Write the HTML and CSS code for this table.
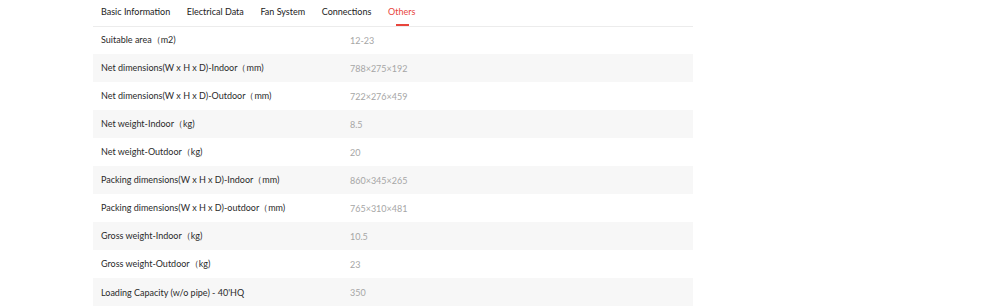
FILE: index.html
```html
<!DOCTYPE html>
<html>
<head>
<meta charset="utf-8">
<link rel="stylesheet" href="styles.css">
</head>
<body>
<div class="specs">
  <div class="tabs">
    <span class="tab">Basic Information</span>
    <span class="tab">Electrical Data</span>
    <span class="tab">Fan System</span>
    <span class="tab">Connections</span>
    <span class="tab active">Others</span>
  </div>
  <div class="rows">
    <div class="row"><span class="label">Suitable area（m2)</span><span class="value">12-23</span></div>
    <div class="row"><span class="label">Net dimensions(W x H x D)-Indoor（mm)</span><span class="value">788×275×192</span></div>
    <div class="row"><span class="label">Net dimensions(W x H x D)-Outdoor（mm)</span><span class="value">722×276×459</span></div>
    <div class="row"><span class="label">Net weight-Indoor（kg)</span><span class="value">8.5</span></div>
    <div class="row"><span class="label">Net weight-Outdoor（kg)</span><span class="value">20</span></div>
    <div class="row"><span class="label">Packing dimensions(W x H x D)-Indoor（mm)</span><span class="value">860×345×265</span></div>
    <div class="row"><span class="label">Packing dimensions(W x H x D)-outdoor（mm)</span><span class="value">765×310×481</span></div>
    <div class="row"><span class="label">Gross weight-Indoor（kg)</span><span class="value">10.5</span></div>
    <div class="row"><span class="label">Gross weight-Outdoor（kg)</span><span class="value">23</span></div>
    <div class="row"><span class="label">Loading Capacity (w/o pipe) - 40'HQ</span><span class="value">350</span></div>
  </div>
</div>
</body>
</html>
```
FILE: styles.css
```css
html, body {
  margin: 0;
  padding: 0;
  background: #fff;
}
body {
  font-family: "Lato", "Noto Sans", sans-serif;
  font-size: 9px;
}
.specs {
  width: 600px;
  margin-left: 93px;
}
.tabs {
  display: flex;
  gap: 16.6px;
  height: 26px;
  padding-left: 8px;
  border-bottom: 1px solid #ececec;
}
.tab {
  position: relative;
  color: #222;
  line-height: 24px;
}
.tab.active {
  color: #e8453c;
}
.tab.active::after {
  content: "";
  position: absolute;
  left: 50%;
  bottom: 0;
  width: 13px;
  height: 2px;
  margin-left: -6px;
  background: #e8453c;
}
.rows {
  display: flex;
  flex-direction: column;
}
.row {
  display: grid;
  grid-template-columns: 257px 1fr;
  height: 28px;
  align-items: center;
}
.row:first-child {
  height: 27px;
}
.row:nth-child(even) {
  background: #f7f7f7;
}
.label {
  padding-left: 8px;
  color: #2a2a2a;
}
.value {
  color: #a6a6a6;
}
```
